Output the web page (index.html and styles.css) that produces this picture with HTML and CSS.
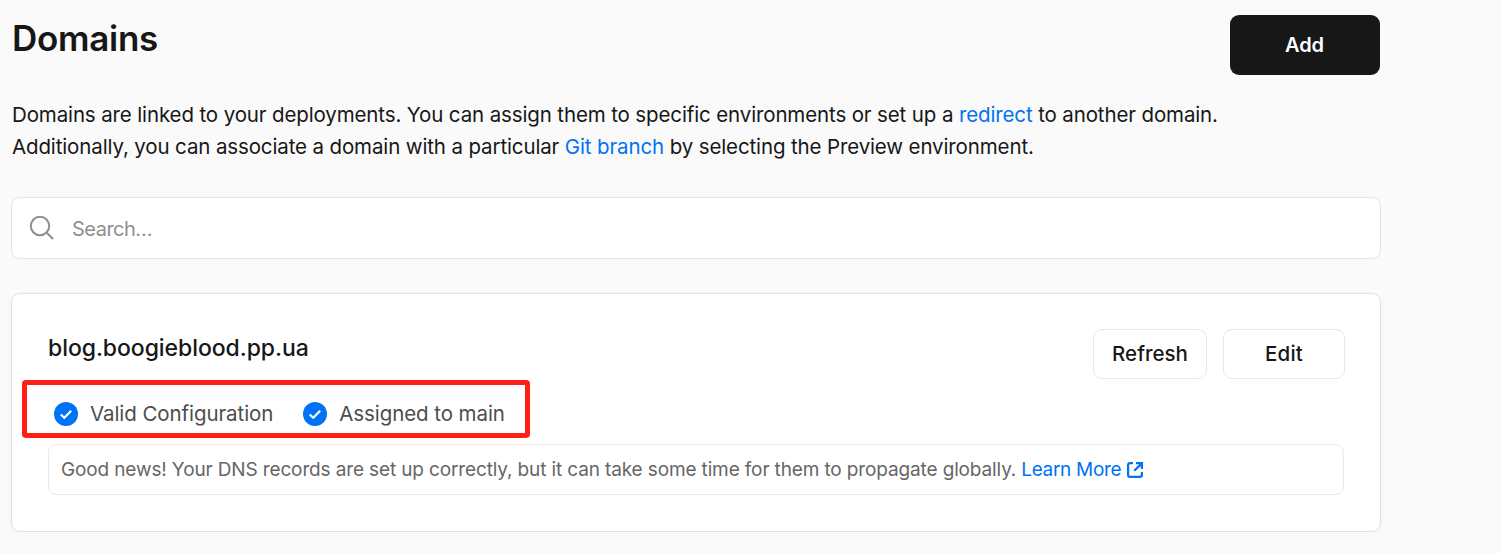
FILE: index.html
```html
<!DOCTYPE html>
<html lang="en">
<head>
<meta charset="utf-8">
<title>Domains</title>
<link rel="stylesheet" href="styles.css">
</head>
<body>
<main class="page">
  <header class="header">
    <h1 class="title"><span>Domains</span></h1>
    <button class="button button-add"><span>Add</span></button>
  </header>
  <p class="intro">
    <span class="intro-first">Domains are linked to your deployments. You can assign them to specific environments or set up a <a class="link">redirect</a> to another domain.</span><br>
    <span class="intro-second">Additionally, you can associate a domain with a particular <a class="link">Git branch</a> by selecting the Preview environment.</span>
  </p>
  <div class="search">
    <svg class="search-icon" viewBox="0 0 26 26" fill="none" stroke="#8f8f8f" stroke-width="2.1"><circle cx="11" cy="11" r="9.2"/><path d="M17.5 17.5 24 24"/></svg>
    <span class="search-text">Search…</span>
  </div>
  <section class="card">
    <div class="card-top">
      <h2 class="domain"><span>blog.boogieblood.pp.ua</span></h2>
      <div class="actions">
        <button class="button button-refresh"><span>Refresh</span></button>
        <button class="button button-edit"><span>Edit</span></button>
      </div>
    </div>
    <div class="statuses">
      <div class="status">
        <svg class="check" viewBox="0 0 24 24" fill="none"><circle cx="12" cy="12" r="12" fill="#0072f5"/><path d="M6.7 12.5 10.3 15.8 17.2 8.8" stroke="#fff" stroke-width="2.2"/></svg>
        <span class="status-text">Valid Configuration</span>
      </div>
      <div class="status">
        <svg class="check" viewBox="0 0 24 24" fill="none"><circle cx="12" cy="12" r="12" fill="#0072f5"/><path d="M6.7 12.5 10.3 15.8 17.2 8.8" stroke="#fff" stroke-width="2.2"/></svg>
        <span class="status-text">Assigned to main</span>
      </div>
    </div>
    <div class="note">
      <span class="note-text">Good news! Your DNS records are set up correctly, but it can take some time for them to propagate globally.</span>
      <a class="link note-link"><span>Learn More</span><svg class="external" viewBox="0 0 16 16" fill="none" stroke="#0072f5" stroke-width="2.2"><path d="M6 1.2H3Q1.1 1.2 1.1 3V13Q1.1 14.9 3 14.9H13Q14.9 14.9 14.9 13V10"/><path d="M9 1.2H14.9V7M14.5 1.6 7.3 8.8"/></svg></a>
    </div>
  </section>
</main>
</body>
</html>
```
FILE: styles.css
```css
*, *::after { box-sizing: border-box; }
body {
  margin: 0;
  background: #fafafa;
  color: #171717;
  font-family: Inter, "Liberation Sans", sans-serif;
  font-size: 20.5px;
  white-space: nowrap;
}
h1, h2, p { margin: 0; }
.page { width: 1381px; padding: 15px 0 0 11px; }
.header { display: flex; justify-content: space-between; height: 60px; padding-right: 1px; }
.title { padding-left: 1px; font-size: 35px; line-height: 46px; font-weight: 600; letter-spacing: -0.28px; }
.button {
  padding: 0;
  border: 1px solid #e9e9e9;
  border-radius: 9px;
  background: #fff;
  color: #171717;
  font: 500 20.5px/48px Inter, "Liberation Sans", sans-serif;
}
.button-add { width: 150px; height: 60px; padding-right: 1px; border: 0; background: #171717; color: #fff; line-height: 60px; font-size: 20px; font-weight: 600; letter-spacing: -0.1px; }
.intro { margin-top: 24px; padding-left: 1px; line-height: 32px; letter-spacing: -0.128px; }
.link { color: #0072f5; }
.search {
  display: flex;
  align-items: center;
  gap: 17px;
  height: 62px;
  margin-top: 34px;
  padding-left: 17px;
  border: 1px solid #e5e5e5;
  border-radius: 9px;
  background: #fff;
  color: #8f8f8f;
}
.search-icon { width: 26px; height: 26px; }
.search-text { padding-top: 2px; font-size: 20px; letter-spacing: -0.5px; }
.card {
  height: 239px;
  margin-top: 34px;
  padding: 35px 35px 0 36px;
  border: 1px solid #e2e2e2;
  border-radius: 9px;
  background: #fff;
  box-shadow: 0 1px 3px rgba(0, 0, 0, 0.06);
}
.card-top { display: flex; justify-content: space-between; }
.domain { font-size: 23px; line-height: 38px; font-weight: 500; letter-spacing: -0.06px; }
.actions { display: flex; gap: 16px; }
.button-refresh { width: 114px; height: 50px; }
.button-edit { width: 122px; height: 50px; letter-spacing: 0.15px; }
.statuses { position: relative; display: flex; gap: 30px; height: 65px; padding: 23px 0 0 6px; color: #4d4d4d; }
.statuses::after {
  content: "";
  position: absolute;
  left: -26px;
  top: 1px;
  width: 508px;
  height: 58px;
  border: 5px solid #ff2015;
  border-radius: 4px;
}
.status { display: flex; gap: 12px; height: 24px; }
.status-text { line-height: 23px; letter-spacing: -0.08px; }
.check { width: 24px; height: 24px; }
.note {
  display: flex;
  align-items: center;
  gap: 5px;
  width: 1296px;
  height: 51px;
  padding-left: 12px;
  border: 1px solid #eaeaea;
  border-radius: 8px;
  color: #666;
  font-size: 19px;
  letter-spacing: -0.133px;
}
.note-link { display: flex; align-items: center; gap: 6px; letter-spacing: -0.3px; }
.external { width: 16px; height: 16px; }
```
